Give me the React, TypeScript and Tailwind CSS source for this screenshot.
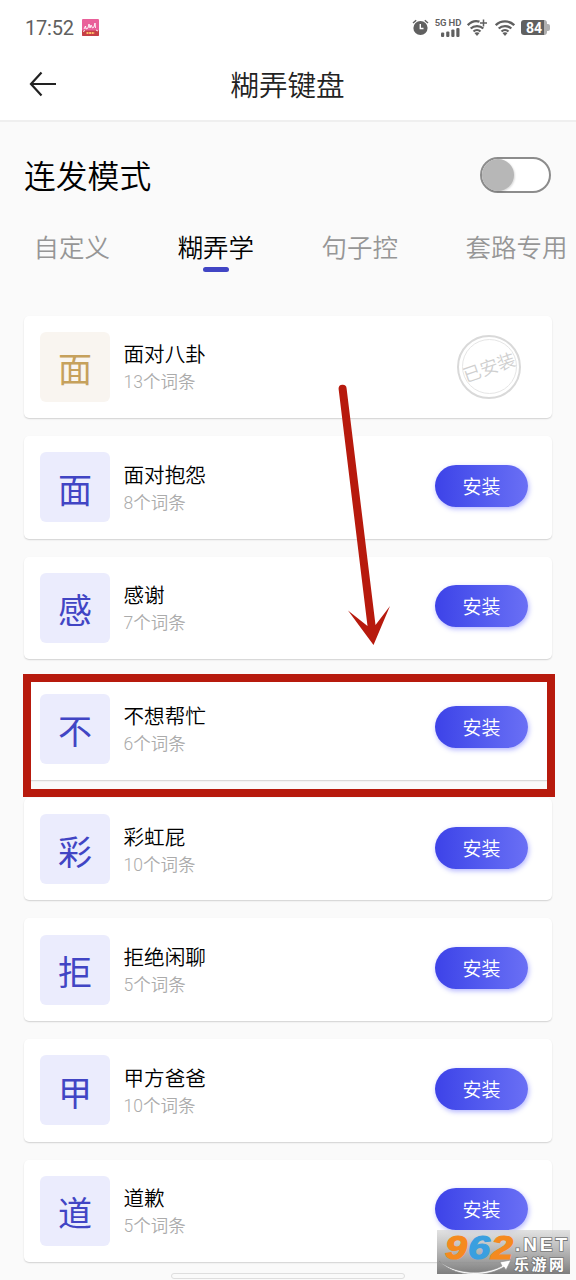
import clsx from 'clsx';

interface Pack {
  icon: string;
  name: string;
  count: number;
  installed?: boolean;
}

const packs: Pack[] = [
  { icon: '面', name: '面对八卦', count: 13, installed: true },
  { icon: '面', name: '面对抱怨', count: 8 },
  { icon: '感', name: '感谢', count: 7 },
  { icon: '不', name: '不想帮忙', count: 6 },
  { icon: '彩', name: '彩虹屁', count: 10 },
  { icon: '拒', name: '拒绝闲聊', count: 5 },
  { icon: '甲', name: '甲方爸爸', count: 10 },
  { icon: '道', name: '道歉', count: 5 },
];

const tabs = ['自定义', '糊弄学', '句子控', '套路专用'];

function WifiIcon({ plus = false }: { plus?: boolean }) {
  return (
    <svg width="20" height="18" viewBox="0 0 20 18" fill="none" stroke="#606060" strokeWidth="2.3">
      <path d={plus ? 'M.8 6.2C4.500 2.300 9 1.600 12.500 2.700' : 'M.8 6.200c5-5 13.400-5 18.400 0'} />
      <path d="M3.700 9.500c3.400-3.300 9.200-3.300 12.600 0" />
      <path d="M6.500 12.500c2-1.900 5-1.900 7 0" />
      <path d="M7.500 14.100c1.300-1 3.700-1 5 0L10 17z" fill="#606060" stroke="none" />
      {plus && <path d="M16.500 .5v7M13 4h7" strokeWidth="1.500" />}
    </svg>
  );
}

function StatusBar() {
  return (
    <div className="flex h-[55px] items-center pl-[25px] pr-[26px] text-[#606060]">
      <span className="w-[50px] font-['Roboto'] text-[20px] leading-6 tracking-[-0.2px]">17:52</span>
      <svg className="ml-[7px]" width="17" height="17" viewBox="0 0 17 17">
        <rect width="17" height="17" rx="1" fill="#e9609a" />
        <path d="M0 11.500h17V16a1 1 0 0 1-1 1H1a1 1 0 0 1-1-1z" fill="#c63f45" />
        <path d="M2 10l1.500-3 .5 3 2-1 1-4 1 4 1-3 1.500 3 1.500-1 1-4 .5 5M1 12.500l2-1M14 11l2 1" fill="none" stroke="#fff" strokeWidth=".9" />
        <path d="M4.500 14h8" stroke="#ffc16b" strokeWidth="2" strokeDasharray="2 .6" />
      </svg>
      <div className="ml-auto flex items-center">
        <svg width="17" height="17" viewBox="0 0 17 17">
          <circle cx="8.500" cy="9" r="7.100" fill="#606060" />
          <path d="M1 4l3.200-2.700M16 4l-3.200-2.700" stroke="#606060" strokeWidth="1.500" />
          <path d="M8.300 5v4.500h3.200" fill="none" stroke="#fff" strokeWidth="1.400" />
        </svg>
        <div className="ml-[5px] flex w-7 flex-col items-center">
          <span className="font-['Roboto'] text-[9.500px] font-semibold leading-[9px] tracking-[-0.1px] whitespace-nowrap">5G HD</span>
          <svg className="mt-px ml-[5px]" width="19" height="9" viewBox="0 0 19 9" fill="#606060">
            <rect x="0" y="4.500" width="3.200" height="4.500" rx="1" />
            <rect x="5.200" y="3.500" width="3.200" height="5.500" rx="1" />
            <rect x="10.300" y="1.500" width="3.200" height="7.500" rx="1" />
            <rect x="15.300" y="0" width="3.200" height="9" rx="1" />
          </svg>
        </div>
        <div className="ml-[5px]"><WifiIcon plus /></div>
        <div className="ml-[8px]"><WifiIcon /></div>
        <div className="ml-[6px] flex items-center">
          <div className="flex h-[15px] w-[26px] items-center justify-center rounded-[3px] border-r-[3px] border-[#b0b0b0] bg-[#606060] pl-[3px] font-['Roboto'] text-[14px] font-bold leading-none text-white">
            84
          </div>
          <div className="h-[7px] w-[3px] rounded-r-[2px] bg-[#b0b0b0]" />
        </div>
      </div>
    </div>
  );
}

function InstalledStamp() {
  return (
    <div className="mr-[31px] flex size-[64px] items-center justify-center rounded-full border-2 border-[#d9d9d9]">
      <div className="flex size-[55px] items-center justify-center rounded-full border border-[#e6e6e6]">
        <span className="-rotate-[19deg] pb-0.5 text-[18px] leading-none font-[350] whitespace-nowrap text-[#cfcfcf]">已安装</span>
      </div>
    </div>
  );
}

function PackCard({ pack }: { pack: Pack }) {
  return (
    <div className="flex h-[102.500px] shrink-0 items-center rounded-[5px] bg-white pl-4 shadow-[0_1px_1.500px_rgba(0,0,0,0.16)]">
      <div
        className={clsx(
          'flex size-[70px] items-center justify-center rounded-[6px] pt-[3px] text-[34px] leading-none',
          pack.installed ? 'bg-[#f9f5f0] text-[#c6a15c]' : 'bg-[#ebecfd] text-[#4145c4]',
        )}
      >
        {pack.icon}
      </div>
      <div className="ml-[13.500px] flex flex-col pt-0.5">
        <span className="text-[20.600px] leading-[30px] font-[350] text-black">{pack.name}</span>
        <span className="font-['Roboto','Noto_Sans_CJK_SC',sans-serif] text-[17.500px] leading-[29px] font-[350] text-[#ababab]">
          {pack.count}个词条
        </span>
      </div>
      <div className="ml-auto">
        {pack.installed ? (
          <InstalledStamp />
        ) : (
          <button className="mr-6 mb-[3px] flex h-[42px] w-[93px] items-center justify-center rounded-full bg-linear-to-r from-[#3d42e8] to-[#6a6ff5] pb-px text-[19px] leading-none font-[350] text-white shadow-[1px_2px_5px_rgba(90,95,255,0.45)]">
            安装
          </button>
        )}
      </div>
    </div>
  );
}

function Watermark() {
  return (
    <svg className="absolute top-[1230px] left-[437px]" width="133" height="44" viewBox="0 0 133 44">
      <defs>
        <linearGradient id="wm" x1="0" y1="0" x2="0" y2="1">
          <stop offset="0" stopColor="#d8d8d8" stopOpacity=".75" />
          <stop offset="1" stopColor="#777" stopOpacity=".95" />
        </linearGradient>
      </defs>
      <rect width="133" height="44" fill="url(#wm)" />
      <g fontFamily="Liberation Sans" fontWeight="bold" fontStyle="italic" strokeWidth="1.200" fontSize="33">
        <text x="8" y="28.500" textLength="22" lengthAdjust="spacingAndGlyphs" fill="#f58a1f" stroke="#f58a1f">9</text>
        <text x="31" y="28.500" textLength="22" lengthAdjust="spacingAndGlyphs" fill="#3a9fe0" stroke="#3a9fe0">6</text>
        <text x="54" y="28.500" textLength="22" lengthAdjust="spacingAndGlyphs" fill="#f58a1f" stroke="#f58a1f">2</text>
      </g>
      <path d="M2 31c16 13 44 15 63 5l-2-4 11-2-5 10-2-3C46 49 16 46 2 31z" fill="#fff" stroke="#888" strokeWidth=".6" />
      <g fill="#fff" stroke="#777" strokeWidth="1.600" paintOrder="stroke" fontWeight="bold">
        <text x="78" y="21" fontFamily="Liberation Sans" fontSize="19" textLength="52" lengthAdjust="spacing">.NET</text>
        <text x="77" y="39.500" fontFamily="Noto Sans CJK SC" fontSize="15" textLength="50">乐游网</text>
      </g>
    </svg>
  );
}

export default function App() {
  return (
    <div className="relative h-[1280px] w-[576px] overflow-hidden bg-[#fafafa] font-['Noto_Sans_CJK_SC',sans-serif]">
      <header className="h-[122px] border-b-2 border-[#efefef] bg-white">
        <StatusBar />
        <div className="relative flex h-[58px] items-center justify-center">
          <svg className="absolute left-[29px]" width="28" height="26" viewBox="0 0 28 26" fill="none" stroke="#222" strokeWidth="2.200">
            <path d="M12.500 1.500L2 13l10.500 11.500M2 13h25" />
          </svg>
          <h1 className="pr-px text-[28.600px] leading-none font-[350] text-[#222]">糊弄键盘</h1>
        </div>
      </header>

      <div className="flex h-[106px] items-center justify-between pr-[25px] pl-6">
        <h2 className="text-[31.800px] leading-none font-[350] text-black">连发模式</h2>
        <button className="flex h-9 w-[71px] items-center rounded-full border-2 border-[#8c8c8c] bg-white">
          <span className="size-8 rounded-full bg-[#b7b7b7] shadow-[1px_1px_2px_rgba(0,0,0,0.15)]" />
        </button>
      </div>

      <nav className="flex h-[87.500px] pl-[33.500px]">
        {tabs.map((tab, i) => (
          <div key={tab} className="flex w-36 shrink-0 flex-col">
            <span className={clsx('text-[25.500px] leading-9 font-[350] whitespace-nowrap', i === 1 ? 'text-black' : 'text-[#969696]')}>
              {tab}
            </span>
            {i === 1 && <span className="mt-[3px] ml-[25.500px] h-[5px] w-[26px] rounded-full bg-[#4145c4]" />}
          </div>
        ))}
      </nav>

      <main className="flex flex-col gap-[18.100px] px-6">
        {packs.map((pack) => (
          <PackCard key={pack.name} pack={pack} />
        ))}
      </main>

      {/* highlight around the pack and the arrow pointing at it */}
      <div className="absolute top-[674px] left-[23px] h-[123px] w-[532px] border-8 border-[#b71a0d]" />
      <svg className="absolute top-[380px] left-[330px]" width="70" height="270" viewBox="0 0 70 270">
        <path
          d="M8.600 9a4 4 0 0 1 8-.5L45.500 245 60 226 43.500 265 18 230.500 37.500 246z"
          fill="#b71a0d"
        />
      </svg>

      <div className="absolute top-[1273px] left-[171px] h-[6px] w-[234px] rounded-full border border-[#dedede] bg-[#fafafa]" />
      <Watermark />
    </div>
  );
}
